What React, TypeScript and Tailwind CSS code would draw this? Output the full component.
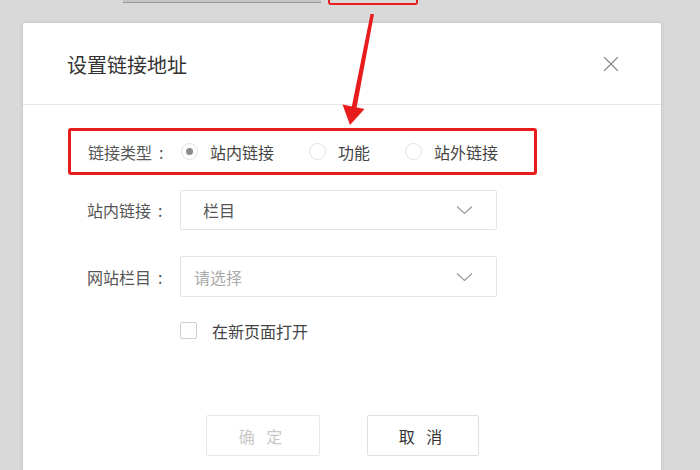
import { X } from "lucide-react"

// link settings dialog over a dimmed page, with red annotation marks
const font = { fontFamily: '"Noto Sans CJK SC", "Noto Sans", sans-serif' }

function Radio({ label, checked = false }: { label: string; checked?: boolean }) {
  return (
    <label className="flex items-center mr-[35px]">
      <span className="w-[17px] h-[17px] rounded-full border border-[#e2e2e2] flex items-center justify-center bg-white">
        {checked && <span className="w-[7px] h-[7px] rounded-full bg-[#8a8a8a]" />}
      </span>
      <span className="ml-[12px] text-[16px] text-[#444]">{label}</span>
    </label>
  )
}

function Label({ text }: { text: string }) {
  return (
    <span className="w-[93px] text-[16px] text-[#555]">
      {text}
      <span className="ml-[7px]">:</span>
    </span>
  )
}

function Chevron() {
  return (
    <svg width="17" height="10" viewBox="0 0 17 10" fill="none" stroke="#9a9a9a" strokeWidth="1.2">
      <polyline points="1,1.5 8.5,8.5 16,1.5" />
    </svg>
  )
}

export default function App() {
  return (
    <div className="relative w-[700px] h-[470px] overflow-hidden bg-[#d9d9d9]" style={font}>
      {/* page behind the dialog, cut off at the top */}
      <div className="h-[23px] flex items-start pl-[123px]">
        <div className="w-[198px] h-[3px] bg-[#c4c4c4] border-b border-[#9a9a9a]" />
        <div className="ml-[7px] w-[90px] h-[5px] border-2 border-t-0 border-[#e81c1c] rounded-b-[3px]" />
      </div>

      <div className="ml-[23px] w-[638px] bg-white shadow-[0_0_4px_rgba(0,0,0,0.12)] rounded-t-[2px]">
        <div className="h-[82px] flex items-center justify-between pl-[44px] pr-[37px] border-b border-[#e6e6e6]">
          <h2 className="text-[20px] text-[#333] pt-[2px]">设置链接地址</h2>
          <X className="w-[26px] h-[26px] text-[#8c8c8c]" strokeWidth={1.1} />
        </div>

        <div className="px-[45px] pb-[30px]">
          <div className="mt-[23px] w-[469px] h-[47px] flex items-center pl-[17px] border-[3px] border-[#e81c1c] rounded-[3px]">
            <Label text="链接类型" />
            <Radio label="站内链接" checked />
            <Radio label="功能" />
            <Radio label="站外链接" />
          </div>

          <div className="mt-[15px] flex items-center pl-[19px]">
            <Label text="站内链接" />
            <div className="w-[317px] h-[40px] flex items-center justify-between pl-[22px] pr-[23px] border border-[#e4e4e4] rounded-[2px]">
              <span className="text-[16px] text-[#555]">栏目</span>
              <Chevron />
            </div>
          </div>

          <div className="mt-[26px] flex items-center pl-[19px]">
            <Label text="网站栏目" />
            <div className="w-[317px] h-[41px] flex items-center justify-between pl-[13px] pr-[23px] border border-[#e4e4e4] rounded-[2px]">
              <span className="text-[16px] text-[#aaa]">请选择</span>
              <Chevron />
            </div>
          </div>

          <div className="mt-[25px] h-[17px] flex items-center pl-[112px]">
            <span className="w-[17px] h-[17px] border border-[#cfcfcf] rounded-[2px] bg-white" />
            <span className="ml-[15px] text-[16px] leading-none text-[#444]">在新页面打开</span>
          </div>

          <div className="mt-[76px] flex justify-center gap-[47px]">
            <button className="w-[114px] h-[41px] border border-[#e8e8e8] rounded-[2px] text-[16px] text-[#c8c8c8] tracking-[4px]">
              确 定
            </button>
            <button className="w-[112px] h-[41px] border border-[#e0e0e0] rounded-[2px] text-[16px] text-[#333] tracking-[4px]">
              取 消
            </button>
          </div>
        </div>
      </div>

      {/* red annotation arrow */}
      <svg className="absolute left-0 top-0 pointer-events-none" width="700" height="470">
        <polygon points="370.5,14 374,14 356.5,108 351.5,108" fill="#e81c1c" />
        <polygon points="342.5,104.5 364.5,109 350,125" fill="#e81c1c" />
      </svg>
    </div>
  )
}
